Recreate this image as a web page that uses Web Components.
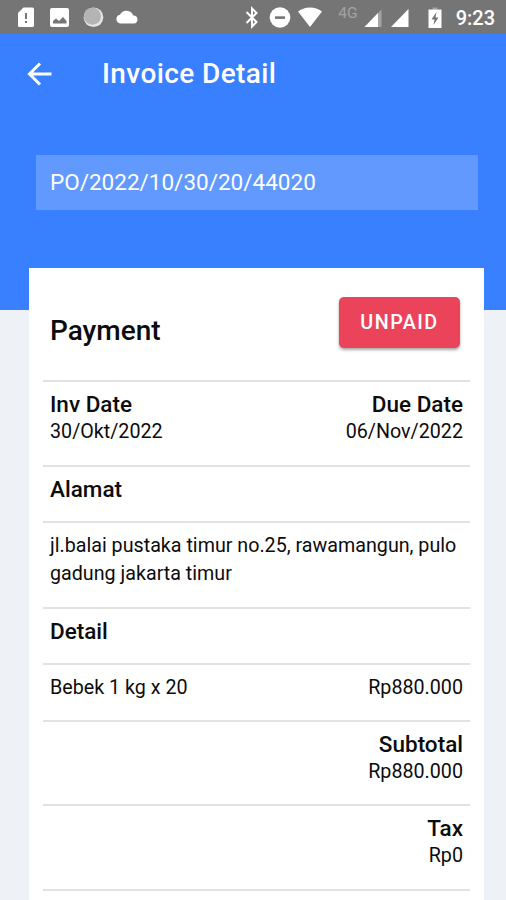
<!DOCTYPE html>
<html lang="id">
<head>
<meta charset="utf-8">
<title>Invoice Detail</title>
<style>
    body {
        margin: 0;
        height: 900px;
        overflow: hidden;
        background-color: #eef2f7;
        color: #0c0c0c;
        font-family: Roboto, "Liberation Sans", sans-serif;
    }
</style>
</head>
<body>
<status-bar time="9:23"></status-bar>
<invoice-header heading="Invoice Detail">PO/2022/10/30/20/44020</invoice-header>
<invoice-card heading="Payment">
    <status-button slot="action">UNPAID</status-button>
    <invoice-row class="double">
        <labeled-value label="Inv Date">30/Okt/2022</labeled-value>
        <labeled-value slot="end" label="Due Date">06/Nov/2022</labeled-value>
    </invoice-row>
    <invoice-row><labeled-value label="Alamat"></labeled-value></invoice-row>
    <invoice-row class="text">jl.balai pustaka timur no.25, rawamangun, pulo gadung jakarta timur</invoice-row>
    <invoice-row><labeled-value label="Detail"></labeled-value></invoice-row>
    <invoice-row>Bebek 1 kg x 20<span slot="end">Rp880.000</span></invoice-row>
    <invoice-row class="double"><labeled-value slot="end" label="Subtotal">Rp880.000</labeled-value></invoice-row>
    <invoice-row class="double"><labeled-value slot="end" label="Tax">Rp0</labeled-value></invoice-row>
    <invoice-row class="last"></invoice-row>
</invoice-card>

<script>
class StatusBar extends HTMLElement {
    constructor() {
        super();
        this.attachShadow({mode: "open"});
        this.shadowRoot.innerHTML = `
            <style>
                :host {
                    display: flex;
                    justify-content: space-between;
                    height: 34px;
                    background-color: #757575;
                    color: #fff;
                }
                svg {
                    display: block;
                    fill: #fff;
                }
                .group {
                    display: flex;
                    align-items: center;
                }
                .left {
                    padding-left: 17px;
                    gap: 13px;
                }
                .left svg:last-child {
                    margin-left: -2px;
                }
                .right {
                    padding-right: 11px;
                }
                .net {
                    align-self: flex-start;
                    margin: 5px 6px 0 15px;
                    font-size: 15.500px;
                    line-height: 17px;
                    color: #a3a3a3;
                }
                .time {
                    margin-left: 14px;
                    padding-top: 2px;
                    font-size: 20px;
                    line-height: 24px;
                    font-weight: 500;
                }
            </style>
            <div class="group left">
                <svg width="18" height="34" viewBox="0 0 18 34">
                    <path d="M6.500 7.500H15.500Q17 7.500 17 9V25.500Q17 27 15.500 27H2.500Q1 27 1 25.500V13Z"/>
                    <path d="M8 13h2v6H8zM8 21h2v2H8z" fill="#757575"/>
                </svg>
                <svg width="21" height="34" viewBox="0 0 21 34">
                    <rect x="2" y="8" width="19" height="19" rx="2"/>
                    <path d="M5 23.500V21l3-2.500 3 2.500 4-4 3.500 4V23.500Z" fill="#757575"/>
                </svg>
                <svg width="22" height="34" viewBox="0 0 22 34">
                    <circle cx="11.500" cy="17.300" r="9.800" fill="#e4e4e4"/>
                    <circle cx="10.500" cy="16.300" r="8.500" fill="#b4b4b4"/>
                </svg>
                <svg width="24" height="34" viewBox="0 0 24 34">
                    <path d="M5.500 23.500a4.400 4.400 0 0 1-.5-8.700 7.200 7.200 0 0 1 13.200.7 4 4 0 0 1 .5 8Z"/>
                </svg>
            </div>
            <div class="group right">
                <svg width="14" height="34" viewBox="0 0 14 34">
                    <path d="M1.500 12 11.500 22 7 26.500V8.500L11.500 13 1.500 23" fill="none" stroke="#fff" stroke-width="2"/>
                </svg>
                <svg width="34" height="34" viewBox="0 0 34 34">
                    <circle cx="21" cy="17.500" r="10.300"/>
                    <path d="M16 16.300h10v2.600H16z" fill="#757575"/>
                </svg>
                <svg width="30" height="34" viewBox="0 0 30 34">
                    <path d="M5 11.500C12 6 22 6 29 11.500L17 27Z"/>
                </svg>
                <span class="net">4G</span>
                <svg width="18" height="34" viewBox="0 0 18 34">
                    <path d="M17.500 9.500V27H0.500Z" fill="#a5a5a5"/>
                    <path d="M14 13V27H0.500Z"/>
                </svg>
                <svg width="27" height="34" viewBox="0 0 27 34">
                    <path d="M26.500 9V27H9Z"/>
                </svg>
                <svg width="33" height="34" viewBox="0 0 33 34">
                    <path d="M23.500 7.500h5v2h-5z" fill="#a5a5a5"/>
                    <path d="M19.500 9.500h13V28h-13z"/>
                    <path d="M27.500 12 22.500 19.500h3L24.500 25 29.500 17.500h-3Z" fill="#757575"/>
                </svg>
                <span class="time"></span>
            </div>
        `;
    }

    connectedCallback() {
        this.shadowRoot.querySelector(".time").textContent = this.getAttribute("time");
    }
}

class InvoiceHeader extends HTMLElement {
    constructor() {
        super();
        this.attachShadow({mode: "open"});
        this.shadowRoot.innerHTML = `
            <style>
                :host {
                    display: block;
                    height: 276px;
                    background-color: #3880ff;
                    color: #fff;
                }
                .toolbar {
                    display: flex;
                    align-items: center;
                    height: 79px;
                    padding-left: 26px;
                }
                h1 {
                    margin: 1px 0 0 50px;
                    font-size: 28px;
                    line-height: 34px;
                    font-weight: 500;
                    letter-spacing: .4px;
                }
                .number {
                    margin: 42px 28px 0 36px;
                    padding-left: 14px;
                    font-size: 22.500px;
                    line-height: 55px;
                    background-color: #6199ff;
                }
            </style>
            <div class="toolbar">
                <svg width="26" height="26" viewBox="0 0 26 26" fill="none" stroke="#fff" stroke-width="3">
                    <path d="M25.500 13H3.500M14 2.500 3.500 13 14 23.500"/>
                </svg>
                <h1></h1>
            </div>
            <div class="number"><slot></slot></div>
        `;
    }

    connectedCallback() {
        this.shadowRoot.querySelector("h1").textContent = this.getAttribute("heading");
    }
}

class InvoiceCard extends HTMLElement {
    constructor() {
        super();
        this.attachShadow({mode: "open"});
        // карточка заходит на синюю шапку
        this.shadowRoot.innerHTML = `
            <style>
                :host {
                    display: block;
                    position: relative;
                    box-sizing: border-box;
                    height: 632px;
                    margin: -42px 22px 0 28.500px;
                    padding: 0 14px;
                    background-color: #fff;
                }
                .head {
                    display: flex;
                    justify-content: space-between;
                    height: 112px;
                    padding: 0 10px 0 7.500px;
                }
                h2 {
                    margin: 46px 0 0;
                    font-size: 28px;
                    line-height: 34px;
                    font-weight: 500;
                }
                ::slotted([slot="action"]) {
                    margin-top: 29px;
                }
            </style>
            <div class="head">
                <h2></h2>
                <slot name="action"></slot>
            </div>
            <slot></slot>
        `;
    }

    connectedCallback() {
        this.shadowRoot.querySelector("h2").textContent = this.getAttribute("heading");
    }
}

class StatusButton extends HTMLElement {
    constructor() {
        super();
        this.attachShadow({mode: "open"});
        this.shadowRoot.innerHTML = `
            <style>
                :host {
                    display: block;
                    width: 121px;
                    height: 51px;
                }
                button {
                    display: block;
                    width: 100%;
                    height: 100%;
                    padding: 0 0 1px;
                    border: none;
                    border-radius: 5px;
                    background-color: #eb445a;
                    box-shadow: 0 2px 3px rgba(0, 0, 0, .35);
                    color: #fff;
                    font: 500 19.700px Roboto, sans-serif;
                    letter-spacing: 1.500px;
                }
            </style>
            <button><slot></slot></button>
        `;
    }
}

class InvoiceRow extends HTMLElement {
    constructor() {
        super();
        this.attachShadow({mode: "open"});
        this.shadowRoot.innerHTML = `
            <style>
                :host {
                    display: flex;
                    justify-content: space-between;
                    box-sizing: border-box;
                    min-height: 56.400px;
                    padding: 9px 7px 16px 7.500px;
                    border-top: 2px solid #e2e2e2;
                    font-size: 19.700px;
                    line-height: 28px;
                }
                :host(.double) {
                    min-height: 84.600px;
                }
                :host(.text) {
                    min-height: 86px;
                }
                :host(.last) {
                    min-height: 0;
                    padding: 0;
                }
            </style>
            <div><slot></slot></div>
            <div><slot name="end"></slot></div>
        `;
    }
}

class LabeledValue extends HTMLElement {
    constructor() {
        super();
        this.attachShadow({mode: "open"});
        this.shadowRoot.innerHTML = `
            <style>
                :host {
                    display: block;
                    line-height: 27px;
                }
                :host([slot="end"]) {
                    text-align: right;
                }
                strong {
                    display: block;
                    font-size: 22.500px;
                    font-weight: 500;
                }
            </style>
            <strong></strong>
            <slot></slot>
        `;
    }

    connectedCallback() {
        this.shadowRoot.querySelector("strong").textContent = this.getAttribute("label");
    }
}

customElements.define("status-bar", StatusBar);
customElements.define("invoice-header", InvoiceHeader);
customElements.define("invoice-card", InvoiceCard);
customElements.define("status-button", StatusButton);
customElements.define("invoice-row", InvoiceRow);
customElements.define("labeled-value", LabeledValue);
</script>
</body>
</html>
